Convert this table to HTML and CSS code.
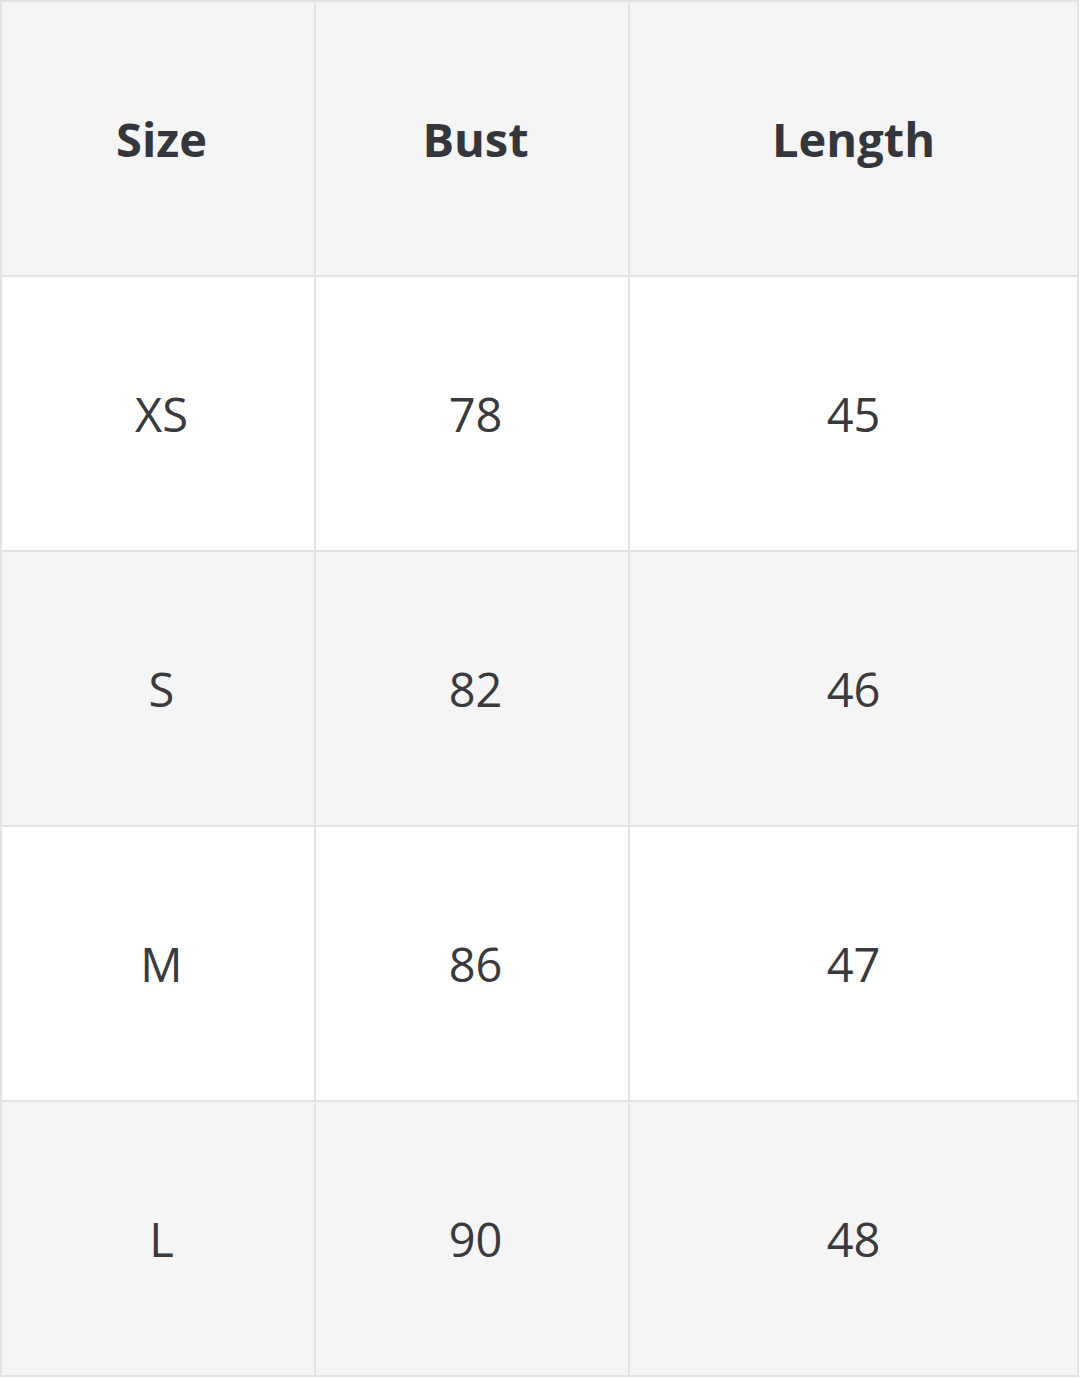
FILE: index.html
```html
<!DOCTYPE html>
<html lang="en">
<head>
<meta charset="utf-8">
<title>Size chart</title>
<link rel="stylesheet" href="styles.css">
</head>
<body>
<table class="size-table">
  <colgroup>
    <col class="col-narrow">
    <col class="col-narrow">
    <col class="col-wide">
  </colgroup>
  <thead>
    <tr class="row-head">
      <th>Size</th>
      <th>Bust</th>
      <th>Length</th>
    </tr>
  </thead>
  <tbody>
    <tr class="row-white"><td>XS</td><td>78</td><td>45</td></tr>
    <tr class="row-gray"><td>S</td><td>82</td><td>46</td></tr>
    <tr class="row-white"><td>M</td><td>86</td><td>47</td></tr>
    <tr class="row-gray"><td>L</td><td>90</td><td>48</td></tr>
  </tbody>
</table>
</body>
</html>
```
FILE: styles.css
```css
html, body {
  margin: 0;
  padding: 0;
  background: #ffffff;
}

.size-table {
  border-collapse: collapse;
  table-layout: fixed;
  width: 1077px;
  font-family: "Open Sans", "Noto Sans", sans-serif;
  font-size: 47px;
  color: #3a3a3c;
}

.col-narrow { width: 314px; }
.col-wide { width: 449px; }

.size-table th,
.size-table td {
  height: 273px;
  padding: 0;
  text-align: center;
  vertical-align: middle;
  border: 2px solid #e3e3e3;
}

.size-table th:not(:last-child),
.size-table td:not(:last-child) {
  padding-left: 7px;
}

.size-table th {
  font-weight: 700;
  color: #34363b;
}

.size-table td {
  font-weight: 400;
}

.row-head,
.row-gray {
  background: #f5f5f6;
}

.row-white {
  background: #ffffff;
}
```
